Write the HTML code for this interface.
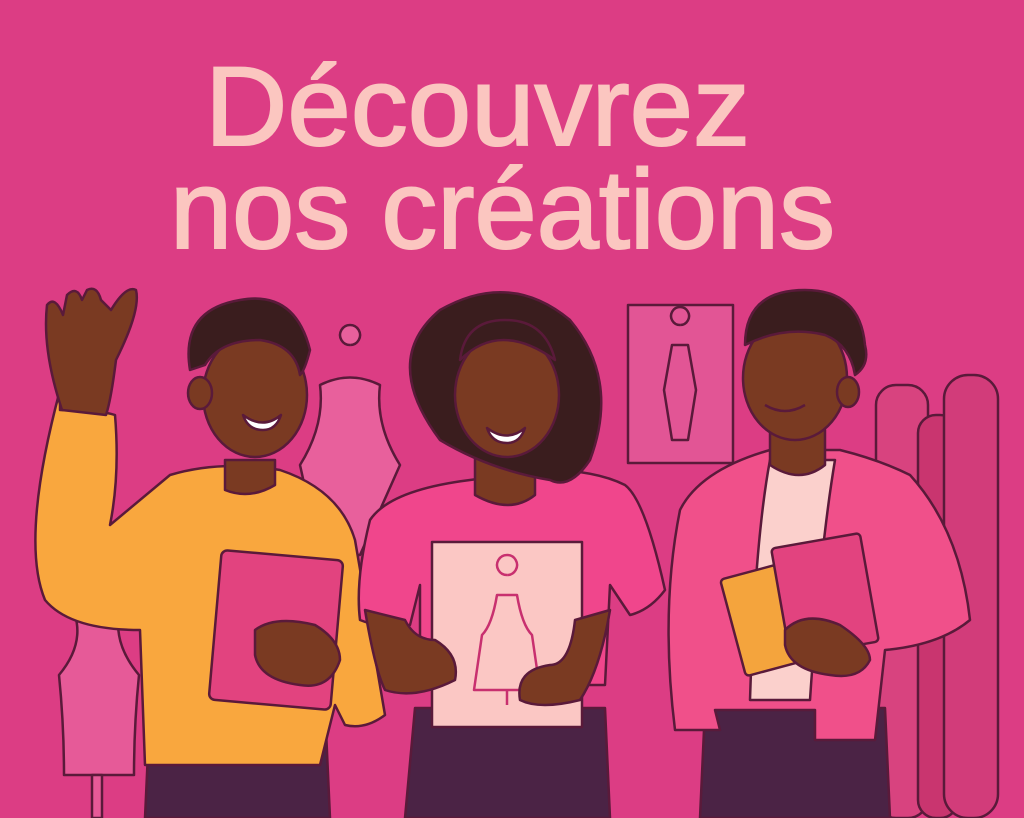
<!DOCTYPE html>
<html><head><meta charset="utf-8"><style>
html,body{margin:0;padding:0;background:#dc3d84;}
svg{display:block}
</style></head><body>
<svg width="1024" height="818" viewBox="0 0 1024 818" xmlns="http://www.w3.org/2000/svg">
<rect width="1024" height="818" fill="#dc3d84"/>
<g font-family="Liberation Sans, sans-serif" font-weight="normal" fill="#fbc6c0" stroke="#fbc6c0" stroke-width="2">
<text x="205" y="145" font-size="112" textLength="545" lengthAdjust="spacingAndGlyphs">Découvrez</text>
<text x="170" y="248" font-size="112" textLength="665" lengthAdjust="spacingAndGlyphs">nos créations</text>
</g>
<g stroke="#5a1a3a" stroke-width="2.5" stroke-linejoin="round">
<rect x="876" y="385" width="52" height="433" rx="20" fill="#d8437f"/>
<rect x="918" y="415" width="40" height="403" rx="18" fill="#c9356f"/>
<rect x="944" y="375" width="54" height="443" rx="24" fill="#d23c7a"/>
<rect x="628" y="305" width="105" height="158" fill="#e25595"/>
<path d="M680 325 a9 9 0 1 1 0.1 0 M672 345 l-8 45 l8 50 h16 l8-50 l-8-45z" fill="none" stroke="#5a1a3a"/>
<path d="M350 345 a10 10 0 1 1 0.1 0 M320 385 q30-15 60 0 q-5 40 20 80 l-40 90 h-40 l-20-90 q25-40 20-80z" fill="#e8609c"/>
<path d="M97 590 a8 8 0 1 1 0.1 0 M75 615 q22-10 44 0 q-5 30 20 60 q-5 50 -5 100 h-70 q0-50-5-100 q25-30 16-60z" fill="#e65a98"/>
<rect x="92" y="775" width="10" height="43" fill="#e65a98"/>
<path d="M145 818 l5-110 h175 l5 110z" fill="#4b2345"/>
<path d="M60 410 q40 0 55 5 q5 60 -5 110 l60 -50 q50-15 110-5 q60 20 75 70 l30 175 q-20 15 -40 10 l-10 -20 l-15 60 h-175 l-5-135 q-70 0-95-30 q-25-60 15-210z" fill="#f9a73e"/>
<path d="M62 410 q-20-60 -15-105 q8-10 16 10 l4 -20 q10-10 15 5 l5-10 q10-5 14 10 l10 10 q15-25 25-20 q5 20 -20 70 q-5 40 -10 55z" fill="#7a3a22"/>
<path d="M225 460 v30 q25 10 50 -5 v-25z" fill="#7a3a22"/>
<ellipse cx="255" cy="395" rx="52" ry="62" fill="#7a3a22"/>
<ellipse cx="200" cy="393" rx="12" ry="16" fill="#7a3a22"/>
<path d="M190 370 q-10-60 50-70 q55-10 70 50 q-5 20 -10 25 q-5-30 -40-35 q-40 0 -55 25 z" fill="#3a1d1e"/>
<path d="M243 415 q20 15 38 0 q-5 15 -18 15 q-15 0 -20-15z" fill="#fff"/>
<rect x="215" y="555" width="122" height="150" rx="6" fill="#e2437f" transform="rotate(5 276 630)"/>
<path d="M255 630 q20-15 60-5 q25 15 25 35 q-10 30 -40 25 q-40 -5 -45-30z" fill="#7a3a22"/>
<path d="M405 818 l10-110 h190 l5 110z" fill="#4b2345"/>
<path d="M470 480 q-80 10 -100 40 q-15 60 -10 100 q25 10 50 5 l10 -40 v100 h185 l5-100 l20 30 q20-5 35-25 q-20-90 -40-105 q-30-15 -80-15z" fill="#f0468c"/>
<path d="M475 455 v40 q35 20 60 0 v-40z" fill="#7a3a22"/>
<path d="M440 440 q-60-80 0-130 q70-40 130 10 q50 60 20 140 q-20 30 -40 20 q-60 -10 -110 -40z" fill="#3a1d1e"/>
<ellipse cx="507" cy="395" rx="52" ry="62" fill="#7a3a22"/>
<path d="M460 360 q40-40 95 0 q-10-40 -50-40 q-40 0 -45 40z" fill="#3a1d1e"/>
<path d="M487 428 q20 15 38 0 q-5 15 -18 15 q-15 0 -20-15z" fill="#fff"/>
<rect x="432" y="542" width="150" height="185" fill="#fbc7c4"/>
<path d="M507 575 a10 10 0 1 1 0.1 0 M497 595 q-5 30 -15 40 l-8 55 h66 l-8-55 q-10-10 -15-40z M507 690 v15" fill="none" stroke="#c8306f"/>
<path d="M365 610 q10 60 20 80 q30 10 70 -10 q5-25 -20-40 q-20 0 -30 -20z" fill="#7a3a22"/>
<path d="M610 610 q-10 60 -30 90 q-40 10 -60 0 q-5-30 30-35 q20 0 25-45z" fill="#7a3a22"/>
<path d="M700 818 l5-110 h180 l5 110z" fill="#4b2345"/>
<path d="M770 450 q-70 20 -90 60 q-20 100 -5 220 h45 l-5-20 h100 v30 h60 l10-90 q55 -5 85 -30 q-10-90 -60-145 q-30-15 -70-25z" fill="#f0508a"/>
<path d="M770 460 q-15 80 -20 240 h60 q10-150 25-240z" fill="#fbd0cc"/>
<path d="M770 430 v35 q30 20 55 0 v-35z" fill="#7a3a22"/>
<ellipse cx="795" cy="378" rx="52" ry="62" fill="#7a3a22"/>
<ellipse cx="848" cy="392" rx="11" ry="15" fill="#7a3a22"/>
<path d="M745 345 q0-55 60-55 q55 0 60 55 q5 20 -10 30 q-5-30 -30-40 q-40-10 -80 10z" fill="#3a1d1e"/>
<path d="M765 405 q20 12 40 0" fill="none"/>
<rect x="732" y="570" width="62" height="100" rx="4" fill="#f4a43d" transform="rotate(-15 763 620)"/>
<rect x="780" y="540" width="90" height="110" rx="4" fill="#e2437f" transform="rotate(-10 825 595)"/>
<path d="M785 630 q20-20 55-5 q30 20 30 35 q-10 20 -40 15 q-40 -5 -45-30z" fill="#7a3a22"/>
</g>
</svg>
</body></html>
